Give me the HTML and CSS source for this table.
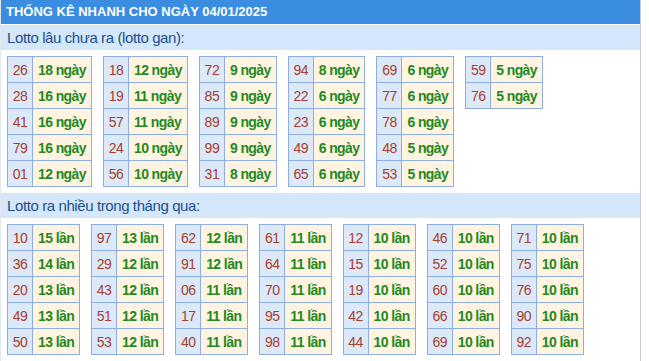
FILE: index.html
```html
<!DOCTYPE html>
<html lang="vi">
<head>
<meta charset="utf-8">
<link rel="stylesheet" href="styles.css">
</head>
<body>
<div class="box">
  <div class="title">THỐNG KÊ NHANH CHO NGÀY 04/01/2025</div>
  <div class="section">Lotto lâu chưa ra (lotto gan):</div>
  <div class="tables">
    <table><tr><td class="n">26</td><td class="v">18 ngày</td></tr><tr><td class="n">28</td><td class="v">16 ngày</td></tr><tr><td class="n">41</td><td class="v">16 ngày</td></tr><tr><td class="n">79</td><td class="v">16 ngày</td></tr><tr><td class="n">01</td><td class="v">12 ngày</td></tr></table>
    <table><tr><td class="n">18</td><td class="v">12 ngày</td></tr><tr><td class="n">19</td><td class="v">11 ngày</td></tr><tr><td class="n">57</td><td class="v">11 ngày</td></tr><tr><td class="n">24</td><td class="v">10 ngày</td></tr><tr><td class="n">56</td><td class="v">10 ngày</td></tr></table>
    <table><tr><td class="n">72</td><td class="v">9 ngày</td></tr><tr><td class="n">85</td><td class="v">9 ngày</td></tr><tr><td class="n">89</td><td class="v">9 ngày</td></tr><tr><td class="n">99</td><td class="v">9 ngày</td></tr><tr><td class="n">31</td><td class="v">8 ngày</td></tr></table>
    <table><tr><td class="n">94</td><td class="v">8 ngày</td></tr><tr><td class="n">22</td><td class="v">6 ngày</td></tr><tr><td class="n">23</td><td class="v">6 ngày</td></tr><tr><td class="n">49</td><td class="v">6 ngày</td></tr><tr><td class="n">65</td><td class="v">6 ngày</td></tr></table>
    <table><tr><td class="n">69</td><td class="v">6 ngày</td></tr><tr><td class="n">77</td><td class="v">6 ngày</td></tr><tr><td class="n">78</td><td class="v">6 ngày</td></tr><tr><td class="n">48</td><td class="v">5 ngày</td></tr><tr><td class="n">53</td><td class="v">5 ngày</td></tr></table>
    <table><tr><td class="n">59</td><td class="v">5 ngày</td></tr><tr><td class="n">76</td><td class="v">5 ngày</td></tr></table>
  </div>
  <div class="section">Lotto ra nhiều trong tháng qua:</div>
  <div class="tables">
    <table><tr><td class="n">10</td><td class="v">15 lần</td></tr><tr><td class="n">36</td><td class="v">14 lần</td></tr><tr><td class="n">20</td><td class="v">13 lần</td></tr><tr><td class="n">49</td><td class="v">13 lần</td></tr><tr><td class="n">50</td><td class="v">13 lần</td></tr></table>
    <table><tr><td class="n">97</td><td class="v">13 lần</td></tr><tr><td class="n">29</td><td class="v">12 lần</td></tr><tr><td class="n">43</td><td class="v">12 lần</td></tr><tr><td class="n">51</td><td class="v">12 lần</td></tr><tr><td class="n">53</td><td class="v">12 lần</td></tr></table>
    <table><tr><td class="n">62</td><td class="v">12 lần</td></tr><tr><td class="n">91</td><td class="v">12 lần</td></tr><tr><td class="n">06</td><td class="v">11 lần</td></tr><tr><td class="n">17</td><td class="v">11 lần</td></tr><tr><td class="n">40</td><td class="v">11 lần</td></tr></table>
    <table><tr><td class="n">61</td><td class="v">11 lần</td></tr><tr><td class="n">64</td><td class="v">11 lần</td></tr><tr><td class="n">70</td><td class="v">11 lần</td></tr><tr><td class="n">95</td><td class="v">11 lần</td></tr><tr><td class="n">98</td><td class="v">11 lần</td></tr></table>
    <table><tr><td class="n">12</td><td class="v">10 lần</td></tr><tr><td class="n">15</td><td class="v">10 lần</td></tr><tr><td class="n">19</td><td class="v">10 lần</td></tr><tr><td class="n">42</td><td class="v">10 lần</td></tr><tr><td class="n">44</td><td class="v">10 lần</td></tr></table>
    <table><tr><td class="n">46</td><td class="v">10 lần</td></tr><tr><td class="n">52</td><td class="v">10 lần</td></tr><tr><td class="n">60</td><td class="v">10 lần</td></tr><tr><td class="n">66</td><td class="v">10 lần</td></tr><tr><td class="n">69</td><td class="v">10 lần</td></tr></table>
    <table><tr><td class="n">71</td><td class="v">10 lần</td></tr><tr><td class="n">75</td><td class="v">10 lần</td></tr><tr><td class="n">76</td><td class="v">10 lần</td></tr><tr><td class="n">90</td><td class="v">10 lần</td></tr><tr><td class="n">92</td><td class="v">10 lần</td></tr></table>
  </div>
</div>
</body>
</html>
```
FILE: styles.css
```css
html, body {
  margin: 0;
  padding: 0;
  background: #fff;
}
body {
  font-family: "Liberation Sans", Arial, sans-serif;
  width: 649px;
  height: 361px;
  overflow: hidden;
}
.box {
  width: 641px;
  border-right: 1px solid #c5ccd6;
  border-left: 1px solid #e3e8ee;
  box-sizing: border-box;
  height: 361px;
}
.title {
  background: #3b8de2;
  color: #fff;
  font-weight: bold;
  font-size: 13px;
  height: 24px;
  line-height: 24px;
  padding-left: 5px;
}
.section {
  margin-top: 1px;
  background: #d4e7fb;
  color: #1d4f8f;
  font-size: 15px;
  letter-spacing: -0.4px;
  height: 25px;
  line-height: 25px;
  padding-left: 6px;
}
.tables {
  display: flex;
  align-items: flex-start;
  gap: 11px;
  padding: 6px 6px 5px 6px;
}
table {
  border-collapse: collapse;
}
td {
  border: 1px solid #8eaee0;
  height: 25px;
  padding: 0 5px;
  font-size: 14px;
}
td.n {
  background: #dce9f9;
  color: #a5402e;
  width: 24px;
  letter-spacing: -0.5px;
  text-align: center;
  padding: 0;
}
td.v {
  background: #fff4e2;
  color: #23891e;
  font-weight: bold;
  letter-spacing: -0.6px;
}
```
